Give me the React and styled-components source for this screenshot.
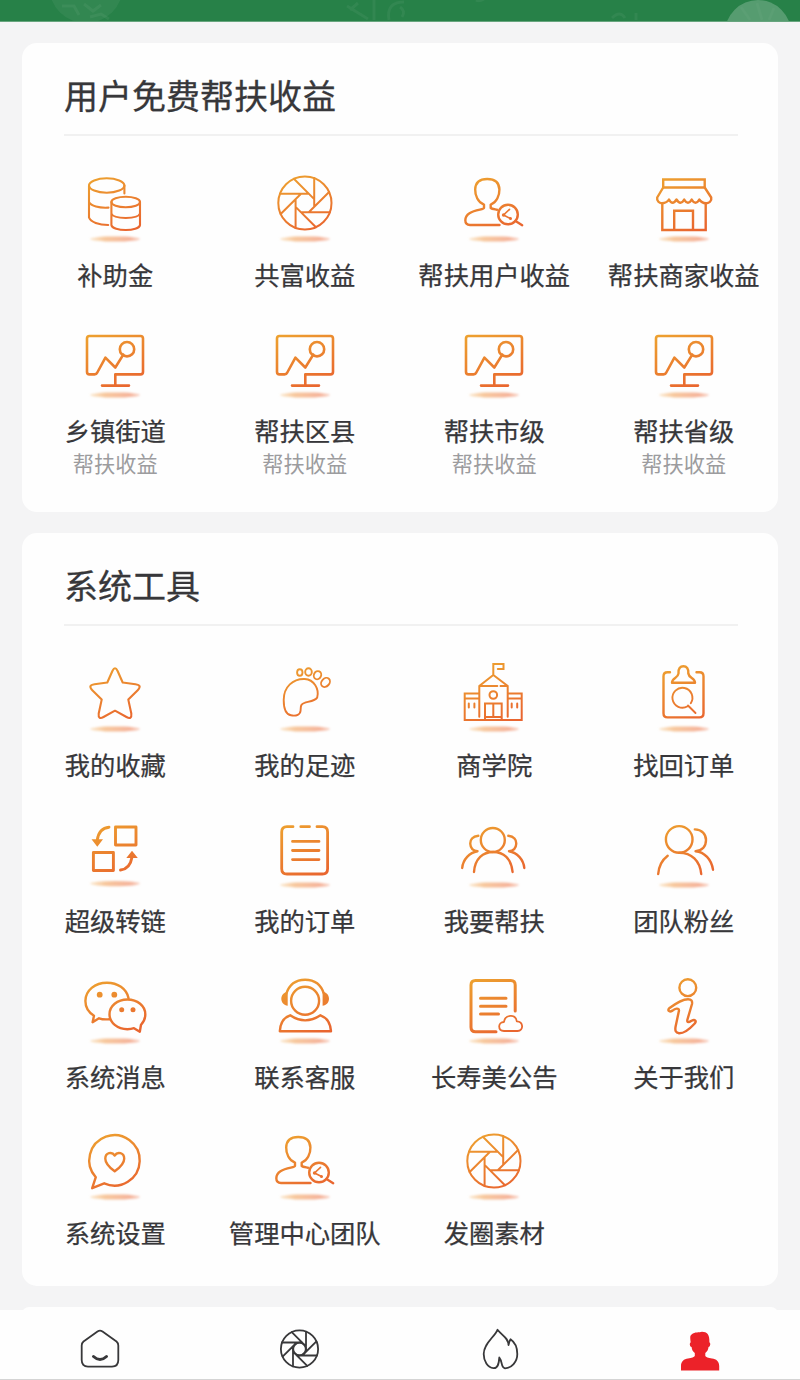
import React from 'react';
import styled, { createGlobalStyle } from 'styled-components';

const GlobalStyle = createGlobalStyle`
    * {
      box-sizing: border-box;
    }
    body {
      margin: 0;
      background: #f4f4f5;
      font-family: 'Noto Sans CJK SC', sans-serif;
    }
`

const Page = styled.div`
    display: flex;
    flex-direction: column;
    height: 1380px;
    overflow: hidden;
    background: #f4f4f5;
`

const Banner = styled.header`
    flex: none;
    height: 22px;
    background: #278148;
    border-bottom: 1px solid #67a57e;
    overflow: hidden;

    svg {
      display: block;
    }
`

const Content = styled.main`
    flex: 1;
    min-height: 0;
    overflow: hidden;
    display: flex;
    flex-direction: column;
    gap: 21px;
    padding: 21px 22px 0;
`

const Card = styled.section`
    flex: none;
    padding: 14px 0 ${props => props.$bottom || 0}px;
    border-radius: 15px;
    background: #fefefe;
`

const CardTitle = styled.h2`
    height: 79px;
    margin: 0 40px 29px 42px;
    border-bottom: 2px solid #f1f1f1;
    color: #37373a;
    font-size: 34px;
    font-weight: 400;
    line-height: 76px;
    -webkit-text-stroke: .3px #37373a;
`

const Grid = styled.div`
    display: grid;
    grid-template-columns: repeat(4, 1fr);
    grid-auto-rows: 156px;
    margin: 0 -.5px 0 -1.5px;
`

const Item = styled.a`
    display: flex;
    flex-direction: column;
    align-items: center;
    white-space: nowrap;
    cursor: pointer;
`

const ItemIcon = styled.svg`
    flex: none;
    width: 80px;
    height: 80px;
    overflow: visible;
    fill: none;
    stroke: url(#line);
    stroke-width: ${props => props.$weight || 2.4};
    stroke-linecap: round;
    stroke-linejoin: round;

    .solid {
      fill: url(#line);
      stroke: none;
    }
    .shadow {
      fill: url(#shade);
      stroke: none;
      filter: url(#soft);
    }
`

const Label = styled.span`
    margin-top: 14px;
    color: #37373a;
    font-size: 25.3px;
    line-height: 31px;
    -webkit-text-stroke: .25px #37373a;
`

const Sub = styled.span`
    margin-top: 2px;
    color: #9c9c9e;
    font-size: 21.2px;
    line-height: 30px;
`

const TabBar = styled.nav`
    flex: none;
    display: grid;
    grid-template-columns: repeat(4, 1fr);
    height: 70px;
    padding-top: 18px;
    border-bottom: 1px solid #d4d4d4;
    background: #fefefe;
`

const Tab = styled.a`
    display: flex;
    justify-content: center;
    color: ${props => props.$active ? '#ec2229' : '#38383a'};
    cursor: pointer;

    svg {
      width: 42px;
      height: 44px;
      fill: none;
      stroke: currentColor;
      stroke-width: 1.8;
      stroke-linecap: round;
      stroke-linejoin: round;
    }
`

const Defs = styled.svg`
    position: absolute;
    width: 0;
    height: 0;
`

// eight blades, each running from the rim to a corner of the inner octagon
const Aperture = ({ x, y, r }) => {
    const point = (px, py, turn) => {
        const a = turn * Math.PI / 4;
        const rx = x + r * (px * Math.cos(a) - py * Math.sin(a));
        const ry = y + r * (px * Math.sin(a) + py * Math.cos(a));
        return `${rx.toFixed(2)} ${ry.toFixed(2)}`;
    }
    const d = [0, 1, 2, 3, 4, 5, 6, 7]
        .map(turn => `M${point(.35, -.937, turn)}L${point(.35, .145, turn)}`)
        .join('');

    return (
        <>
            <circle cx={x} cy={y} r={r} />
            <path d={d} />
        </>
    )
}

const icons = {
    coins: <>
        <ellipse cx="31.7" cy="20.5" rx="17.7" ry="7.2" />
        <path d="M14 20.5V52.5C15.5 57 24 60 33.2 60M49.4 20.5V28.5M14 37C16 41 24 43.2 33.5 42.6" />
        <ellipse cx="50.7" cy="37" rx="14.3" ry="5.2" />
        <path d="M36.4 37V60C37.5 66.7 64 66.7 65 60V37M36.4 48.5C38.5 54.4 63 54.4 65 48.5" />
    </>,
    user: <>
        <path d="M45.500 60H16C9.500 60 10.200 51.500 15.500 48.200C21.500 44.500 30 44.600 30 43V39.600C24 37.500 21 30.500 21.200 24.500C21.400 17.500 26 14 33.200 14C40.500 14 45.200 17.500 45.400 24.500C45.600 30.500 42.500 37.500 36.700 39.600V43C38 44 40.500 44.200 43 44.700" />
        <circle cx="54" cy="49.500" r="9.800" />
        <path d="M61.500 56L68.200 60.200" />
        <path strokeWidth="1.700" d="M55.500 44.300L49.500 50L56.500 53.600" />
        <circle className="solid" cx="49.600" cy="50" r="1.800" />
        <circle className="solid" cx="56.500" cy="53.500" r="1.500" />
    </>,
    shop: <>
        <path strokeLinejoin="miter" d="M19.200 22.500V14.500H60.700V22.500ZM18.300 39V65H61.700V39M30.200 65V45.800H49V65" />
        <path d="M19.200 22.500L13.200 32.500C12.500 36 15.500 38.500 18 38.200Q23 38 25 34.500Q28.500 41 32.500 34.500Q36.500 41 40.200 34.500Q44 41 47.700 34.500Q51.500 41 55.300 34.500Q57.500 38 62 38.200C65 38.500 68 36 67.200 32.500L60.700 22.500" />
    </>,
    monitor: <>
        <path d="M40.300 64.500V53.400H65.500Q68 53.400 68 51V17.500Q68 15 65.500 15H14.500Q12 15 12 17.500V51Q12 53.400 14.500 53.400H19.500Q21.500 53.400 22.300 51.500L30.400 36.600L40.300 46.500L48.300 33.600M27 64.600H54" />
        <circle cx="52" cy="28.200" r="7.200" />
    </>,
    star: <path d="M37.400 16Q40 10.500 42.600 16L47.700 27.500L60.500 29.200Q67.500 30.200 62.700 35.200L53.300 44.600L56.300 58.500Q57 65 51.500 62L40 55.700L28.500 62Q23 65 23.700 58.500L26.700 44.600L17.300 35.200Q12.500 30.200 19.500 29.200L32.300 27.500Z" />,
    foot: <>
        <path d="M39.800 24C28 23.500 18.700 32 18.700 45C18.700 53 21 59.500 26 60.300C31.500 61.300 35.300 59.500 35.600 55.500C35.800 51.500 35.500 49 39.500 47.800C43 46.600 50.500 46 52.200 42.500C54.500 34 49 24.500 39.800 24Z" />
        <ellipse cx="34.800" cy="17.500" rx="2.700" ry="3.300" />
        <ellipse cx="43.500" cy="17" rx="3.300" ry="3.700" />
        <ellipse cx="52.500" cy="20.200" rx="3.600" ry="4.200" transform="rotate(25 52.500 20.200)" />
        <ellipse cx="60.500" cy="27.400" rx="3.900" ry="5" transform="rotate(42 60.500 27.400)" />
    </>,
    school: <>
        <path strokeLinejoin="miter" d="M39.300 20V9H49.500V14H43.800M25.300 61.700V31L39.300 20L53.700 31V61.700M25.300 31H43.300M46.500 31H53.700" />
        <path strokeLinejoin="miter" d="M25 38.400H10.700V65H67.700V38.400H54M10.700 43.400H25M54 43.400H67.700M31 65V48.400H47.700V65M39.300 48.400V62M31 61.900H47.700M14.800 48.500V52.500M20.400 48.500V52.500M57.700 48.500V52.500M63.200 48.500V52.500" />
        <circle cx="39.300" cy="40" r="3.800" />
    </>,
    clipboard: <>
        <path d="M26 17.300H23.500Q19.500 17.300 19.500 21.300V58.300Q19.500 62.400 23.500 62.400H55.500Q59.500 62.400 59.500 58.300V21.300Q59.500 17.300 55.500 17.300H52.500" />
        <path d="M28 27.700H51C51 22.500 45 23.500 44.300 18.500C44.800 13.500 42.500 11.300 39.400 11.300C36.300 11.300 34 13.500 34.500 18.500C34 23.500 28 22.500 28 27.700Z" />
        <path strokeWidth="1.900" d="M43.600 51.300A10 10 0 1 1 46.800 48.200M44 50.500L51.500 58" />
    </>,
    convert: <>
        <rect x="40.500" y="16" width="20.500" height="18" />
        <rect x="18.400" y="41.500" width="20" height="18" />
        <path d="M34 16.200Q24 17 22.300 29M45.500 59Q55 58 56.900 46.500" />
        <path className="solid" d="M16.500 28.200H28L22.300 35.700ZM51.300 47H62.800L57 39.700Z" />
    </>,
    list: <path d="M28 15.700H22Q16.700 15.700 16.700 21V57.700Q16.700 63 22 63H57.300Q62.600 63 62.600 57.700V21Q62.600 15.700 57.300 15.700H52M35.800 15.700H44.500M27.500 30.400H54M27.500 39.500H54M27.500 48.600H54" />,
    team: <>
        <circle cx="38.800" cy="29" r="12" />
        <path d="M20 61C21 47.500 29 41 39.200 41S57.500 47.500 58.600 61M24.300 24.800C18.500 25.500 16 29 16.300 33C16.500 37 19 39.800 23.500 40.200C15.500 41.500 9 48.500 8.200 57M54.300 24.800C60 25.500 62.500 29 62.200 33C62 37 59.500 39.800 55 40.200C63 41.500 69.500 48.500 70.300 57" />
    </>,
    fans: <>
        <circle cx="35.200" cy="28.400" r="13.300" />
        <path d="M35.200 41.700C47.500 41.700 56 50 57.200 63M23.700 44.700C18 49 14.800 55 14.200 63M50.800 18.400C58 18.600 62 23.500 62 29C62 35 58.500 39.500 51.500 40.200C60.500 41 67.500 48.500 69 58.700" />
    </>,
    wechat: <>
        <path d="M53.500 31C51.500 21.500 42.500 15.700 32 15.700C20 15.700 10.400 23.500 10.400 34C10.400 40 13.800 45.500 19 48.700L17.600 55.200L24 51.300C27.500 52.500 31 52.600 34.500 52.200" />
        <path d="M66 57.800C68.700 55 70.300 51.300 70.300 47.300C70.300 39 62.500 32.500 52.400 32.500S34.500 39 34.500 47.300S42.500 62.200 52.400 62.200C54.800 62.200 57 61.900 59 61.200L64.800 64.700Z" />
        <circle className="solid" cx="24.700" cy="27.700" r="2.900" />
        <circle className="solid" cx="39.300" cy="27.700" r="2.900" />
        <circle className="solid" cx="46.700" cy="42.700" r="2.500" />
        <circle className="solid" cx="58" cy="42.700" r="2.500" />
    </>,
    service: <>
        <circle cx="40.100" cy="33.700" r="14" />
        <path d="M21.200 27C24 18 30.500 12.700 40.100 12.700S56.300 18 59 27" />
        <path className="solid" d="M22.700 24.700V38.700C19 38 16.300 35.500 16.300 31.700S19 25.300 22.700 24.700ZM57.600 24.700V38.700C61.500 38 64 35.500 64 31.700S61.500 25.300 57.600 24.700Z" />
        <path d="M14.800 64.200H66C65.500 56.500 61.500 50.500 55.500 48.300Q40 58.500 25.200 48.300C19 50.500 15.200 56.500 14.800 64.200Z" />
    </>,
    notice: <>
        <path d="M42 64.700H21.500Q17 64.700 17 60.200V18Q17 13.400 21.500 13.400H56.800Q61.200 13.400 61.200 18V44M26.500 31.300H52M26.500 39.200H52M26.500 47H44.500" />
        <path strokeWidth="1.800" d="M50 64C43.500 63.500 43.700 55 50 55C51 47.500 61.500 46.500 62.800 54.300C69.500 54.500 70 63.500 63.500 64Z" />
    </>,
    info: <>
        <circle cx="43.800" cy="20.700" r="8.400" />
        <path d="M25.200 41.300C31 37 37.500 32.300 44 32.300C47.500 32.300 48.500 34 48 37L43.300 53C43 56 45 55.500 47.500 53.800C51 52 53 54 50.500 56.700C46.500 61 40 66.500 35 66.300C31.500 66 31 63.500 31.500 60L35 43.500C35 40.500 31 41.500 28.500 43.600C25 45.700 23.200 43.300 25.200 41.300Z" />
    </>,
    settings: <>
        <path d="M20.800 54.200A25.200 25.200 0 1 1 29.200 60.300L17.200 65.200Z" />
        <path d="M39.700 48.300C34.500 44.500 30.300 40.500 30.300 35.700C30.300 29.500 37 28.200 39.700 32.500C42.400 28.200 49.200 29.500 49.200 35.700C49.200 40.500 45 44.500 39.700 48.300Z" />
    </>,
    aperture: <Aperture x={39.9} y={38} r={26.6} />,
}

const weights = { aperture: 2, coins: 2.1, star: 2.1, foot: 1.9, school: 2, monitor: 2.6, convert: 2.9, list: 2.8, notice: 3 };

const benefits = [
    { icon: 'coins', label: '补助金' },
    { icon: 'aperture', label: '共富收益' },
    { icon: 'user', label: '帮扶用户收益' },
    { icon: 'shop', label: '帮扶商家收益' },
    { icon: 'monitor', label: '乡镇街道', sub: '帮扶收益' },
    { icon: 'monitor', label: '帮扶区县', sub: '帮扶收益' },
    { icon: 'monitor', label: '帮扶市级', sub: '帮扶收益' },
    { icon: 'monitor', label: '帮扶省级', sub: '帮扶收益' },
]

const tools = [
    { icon: 'star', label: '我的收藏' },
    { icon: 'foot', label: '我的足迹' },
    { icon: 'school', label: '商学院' },
    { icon: 'clipboard', label: '找回订单' },
    { icon: 'convert', label: '超级转链' },
    { icon: 'list', label: '我的订单' },
    { icon: 'team', label: '我要帮扶' },
    { icon: 'fans', label: '团队粉丝' },
    { icon: 'wechat', label: '系统消息' },
    { icon: 'service', label: '联系客服' },
    { icon: 'notice', label: '长寿美公告' },
    { icon: 'info', label: '关于我们' },
    { icon: 'settings', label: '系统设置' },
    { icon: 'user', label: '管理中心团队' },
    { icon: 'aperture', label: '发圈素材' },
]

const Menu = ({ items }) => (
    <Grid>
        {items.map(({ icon, label, sub }) => (
            <Item key={label}>
                <ItemIcon viewBox="0 0 80 80" $weight={weights[icon]}>
                    {icons[icon]}
                    <ellipse className="shadow" cx="40" cy={icon === 'convert' ? 72.6 : 74} rx="25" ry="2.6" />
                </ItemIcon>
                <Label>{label}</Label>
                {sub && <Sub>{sub}</Sub>}
            </Item>
        ))}
    </Grid>
)

const App = () => {
    return (
        <Page>
            <GlobalStyle />
            <Defs>
                <defs>
                    <linearGradient id="line" gradientUnits="userSpaceOnUse" x1="25" y1="10" x2="50" y2="68">
                        <stop offset="0" stopColor="#eda02f" />
                        <stop offset="1" stopColor="#e9652f" />
                    </linearGradient>
                    <linearGradient id="shade">
                        <stop offset="0" stopColor="#f8cf9c" stopOpacity=".5" />
                        <stop offset=".3" stopColor="#f7c79c" />
                        <stop offset=".8" stopColor="#f5b39a" />
                        <stop offset="1" stopColor="#f5b39a" stopOpacity=".6" />
                    </linearGradient>
                    <filter id="soft" x="-20%" y="-150%" width="140%" height="400%">
                        <feGaussianBlur stdDeviation="1.2" />
                    </filter>
                </defs>
            </Defs>

            <Banner>
                <svg width="800" height="22" fill="none" stroke="#fff" strokeOpacity=".05" strokeWidth="3">
                    <circle cx="86" cy="-14" r="37" fill="#fff" fillOpacity=".05" stroke="none" />
                    <path d="M62 6h12l5 9M84 4l9 7 8-6M90 17l11-3 8 5" />
                    <path d="M347 6l21 13M358 3l-8 7M374 0v20M404 2q-18 0-15 18M400 7q6 4 2 10" />
                    <path d="M476 0q3 2 8-1M612 18q8-8 13 0M636 13v7" />
                    <circle cx="758" cy="33" r="33" fill="#fff" fillOpacity=".22" stroke="none" />
                    <path strokeOpacity=".03" d="M741 7l9 13M757 3l5 17M774 8l-5 12" />
                </svg>
            </Banner>

            <Content>
                <Card $bottom={35}>
                    <CardTitle>用户免费帮扶收益</CardTitle>
                    <Menu items={benefits} />
                </Card>
                <Card $bottom={7}>
                    <CardTitle>系统工具</CardTitle>
                    <Menu items={tools} />
                </Card>
                <Card />
            </Content>

            <TabBar>
                <Tab>
                    <svg viewBox="0 0 42 44">
                        <path d="M18.500 3.500Q21 1.800 23.500 3.500L37.500 13.500Q39.300 15 39.300 17.500V32Q39.300 38.600 33 38.600H9Q2.700 38.600 2.700 32V17.500Q2.700 15 4.500 13.500Z" />
                        <path strokeWidth="3" d="M14.500 28.500Q21 34.500 27.500 28.500" />
                    </svg>
                </Tab>
                <Tab>
                    <svg viewBox="0 0 42 44">
                        <Aperture x={20.5} y={21} r={18.6} />
                        <circle cx="20.500" cy="21" r="6.300" />
                    </svg>
                </Tab>
                <Tab>
                    <svg viewBox="0 0 42 44">
                        <path d="M18.500 1.800C15.500 9 4.700 15.500 4.700 26C4.700 33 8.500 39.500 14.500 40.200C19.500 40.500 20 34 20.300 29.500C24 34 21.500 39.500 26 40.300C32.500 40 38.300 34 38.300 26C38.300 20 35.500 14 31.500 11.300C30.500 12.500 30 14.500 29.500 17C29.500 10 23.500 8 18.500 1.800Z" />
                    </svg>
                </Tab>
                <Tab $active>
                    <svg viewBox="0 0 42 44">
                        <path fill="currentColor" stroke="none" d="M2 42.500V38C2 33 5 31 9 30.400C13 29.600 15 29.400 15.800 28V25C13.800 23.600 12.800 21.500 12.600 19C10.500 18.500 10.300 15 11.700 14.200C11 9 11 7.500 12.600 6.500C16 3.300 20 5 23 3.700C28 4 30.700 6 30.400 14.200C31.800 15 31.500 18.500 29.500 19C29.300 21.500 28.200 23.600 26.300 25V28C27 29.400 29 29.600 33 30.400C37.200 31 40.200 33 40.200 38V42.500Z" />
                    </svg>
                </Tab>
            </TabBar>
        </Page>
    );
}

export default App
